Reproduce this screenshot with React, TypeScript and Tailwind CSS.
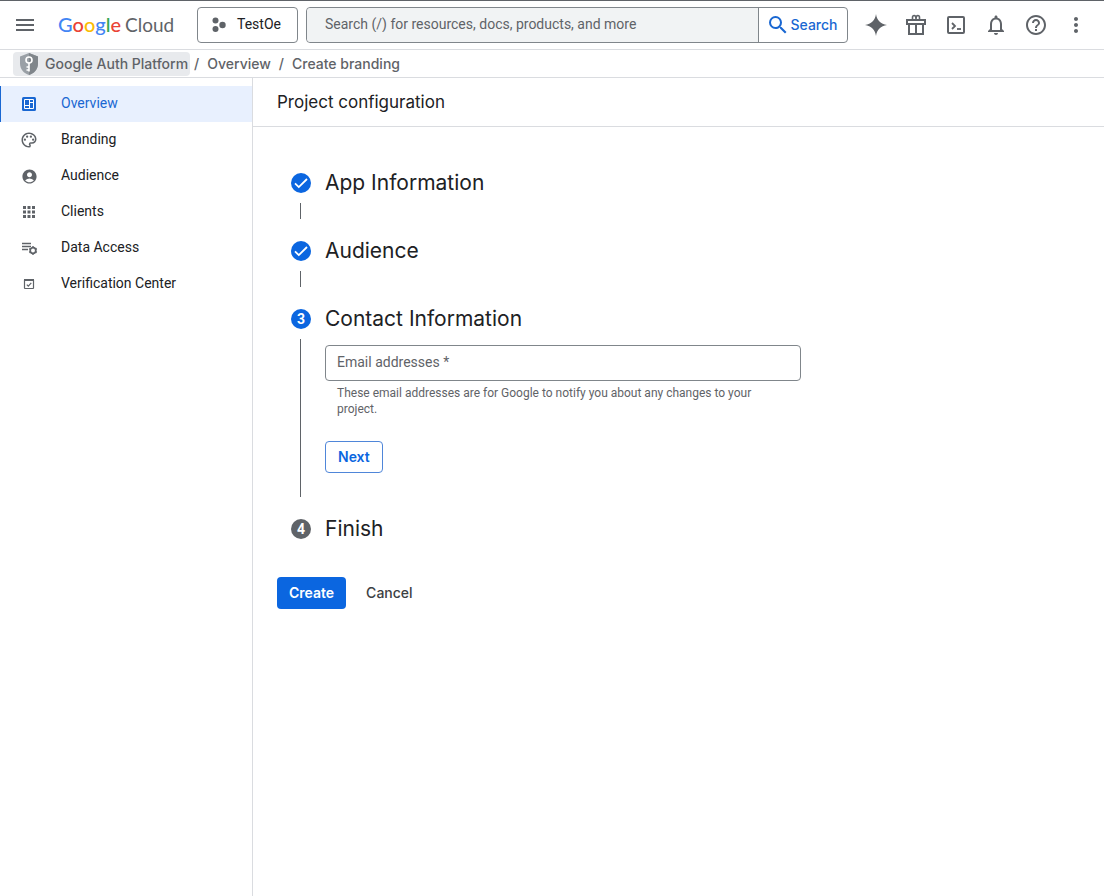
import { useState } from 'react'
import type { ReactNode } from 'react'
import { MdAccountCircle, MdApps, MdHelpOutline, MdMenu, MdMoreVert, MdNotificationsNone, MdOutlinePalette, MdSearch } from 'react-icons/md'

function GiftIcon() {
    return (
        <svg width="24" height="24" viewBox="0 0 24 24" fill="none" stroke="currentColor" strokeWidth="2">
            <path d="M3 7h18v4H3z" />
            <path d="M5 11v10h14V11" />
            <path d="M12 11v10" />
            <path d="M8.500 7V4.500C8.500 3.300 9.200 2.500 10.200 2.500S12 3.300 12 6M15.500 7V4.500C15.500 3.300 14.800 2.500 13.800 2.500S12 3.300 12 6" strokeWidth="1.600" />
        </svg>
    )
}

function ShellIcon() {
    return (
        <svg width="24" height="24" viewBox="0 0 24 24" fill="none" stroke="currentColor" strokeWidth="2">
            <rect x="4" y="4" width="16" height="16" rx="1" />
            <path d="M8 10l3 3-3 3" strokeWidth="1.800" />
            <path d="M13 16h4" strokeWidth="1.800" />
        </svg>
    )
}

function SparkIcon() {
    return (
        <svg width="24" height="24" viewBox="0 0 24 24" fill="currentColor">
            <path d="M12 1c.8 6.200 4.800 10.200 11 11-6.200.8-10.200 4.800-11 11-.8-6.200-4.800-10.200-11-11 6.200-.8 10.200-4.800 11-11z" />
        </svg>
    )
}

function ProjectIcon() {
    return (
        <svg width="16" height="16" viewBox="0 0 16 16" fill="#5f6368">
            <circle cx="4.500" cy="3.500" r="3" />
            <circle cx="4.500" cy="12" r="3" />
            <circle cx="11.500" cy="8" r="3.200" />
        </svg>
    )
}

function ShieldIcon() {
    return (
        <svg width="18" height="22" viewBox="0 0 18 22">
            <path d="M9 0l9 3.500v7C18 16 14.200 20.500 9 22 3.800 20.500 0 16 0 10.500v-7z" fill="#9aa0a6" />
            <path d="M9 0l9 3.500v7C18 16 14.200 20.500 9 22z" fill="#80868b" />
            <circle cx="9" cy="7" r="3" fill="none" stroke="#fff" strokeWidth="1.600" />
            <path d="M9 10V18.500M9 14H6.500M9 17H6.500" stroke="#fff" strokeWidth="1.600" fill="none" />
        </svg>
    )
}

function DashboardIcon() {
    return (
        <svg width="18" height="18" viewBox="0 0 18 18">
            <rect x="2" y="2" width="14" height="14" rx="1.500" fill="currentColor" />
            <path d="M4.500 4.500h9v9h-9zM9.500 4.500v9M4.500 10.500h5M9.500 7.500h4" fill="none" stroke="#fff" />
        </svg>
    )
}

function DataAccessIcon() {
    return (
        <svg width="18" height="18" viewBox="0 0 18 18" fill="none" stroke="currentColor" strokeWidth="1.500">
            <path d="M2 4.500h9M2 7.500h9M2 10.500h6" />
            <circle cx="13" cy="11.500" r="2.800" strokeWidth="1.700" />
            <path d="M13 7.300v1.500M13 14.200v1.500M9.300 9.400l1.300.8M15.400 12.800l1.300.8M9.300 13.600l1.300-.8M15.400 10.200l1.300-.8" strokeWidth="1.800" />
        </svg>
    )
}

function VerificationIcon() {
    return (
        <svg width="18" height="18" viewBox="0 0 18 18" fill="none" stroke="currentColor">
            <rect x="4.500" y="4.500" width="9" height="9" rx=".5" strokeWidth="1.200" />
            <path d="M4 5h10" strokeWidth="2" />
            <path d="M6.800 9.600l1.500 1.500 3-3.200" strokeWidth="1.200" />
        </svg>
    )
}

const navItems = [
    { label: 'Overview', icon: <DashboardIcon /> },
    { label: 'Branding', icon: <MdOutlinePalette size={18} /> },
    { label: 'Audience', icon: <MdAccountCircle size={17} /> },
    { label: 'Clients', icon: <MdApps size={18} /> },
    { label: 'Data Access', icon: <DataAccessIcon /> },
    { label: 'Verification Center', icon: <VerificationIcon /> },
]

const headerActions = [
    { label: 'Gemini', icon: <SparkIcon /> },
    { label: 'Free trial', icon: <GiftIcon /> },
    { label: 'Cloud Shell', icon: <ShellIcon /> },
    { label: 'Notifications', icon: <MdNotificationsNone size={24} /> },
    { label: 'Help', icon: <MdHelpOutline size={24} /> },
    { label: 'More', icon: <MdMoreVert size={24} /> },
]

function Logo() {
    return (
        <a href="#" className="ml-[21px] flex items-baseline gap-1 pb-0.5 font-['Lato',sans-serif] text-xl leading-6 whitespace-nowrap text-[#5f6368]">
            <span className="font-medium">
                <span className="text-[#4285f4]">G</span>
                <span className="text-[#ea4335]">o</span>
                <span className="text-[#fbbc04]">o</span>
                <span className="text-[#4285f4]">g</span>
                <span className="text-[#34a853]">l</span>
                <span className="text-[#ea4335]">e</span>
            </span>
            <span className="text-[19px]">Cloud</span>
        </a>
    )
}

function Header() {
    return (
        <header className="flex h-[50px] items-center border-t border-b border-t-[#5f6368] border-b-[#dadce0] pr-2 pl-[13px] text-[#5f6368]">
            <button aria-label="Main menu"><MdMenu size={24} /></button>
            <Logo />
            <button className="ml-auto flex h-9 w-[101px] shrink-0 items-center gap-2.5 rounded border border-[#80868b] pl-[13px] text-sm text-[#202124]">
                <ProjectIcon />
                <span className="pb-0.5">TestOe</span>
            </button>
            <form className="mx-2 flex h-9 w-[542px] rounded border border-[#80868b]" onSubmit={(e) => e.preventDefault()}>
                <input
                    aria-label="Search"
                    placeholder="Search (/) for resources, docs, products, and more"
                    className="min-w-0 flex-1 rounded-l bg-[#f1f3f4] px-[18px] pb-0.5 text-sm outline-none placeholder:text-[#5f6368]"
                />
                <button className="flex w-[89px] items-center justify-center border-l border-[#80868b] pr-0.5 font-['Inter',sans-serif] text-sm font-medium text-[#1967d2]">
                    <MdSearch size={24} />
                    Search
                </button>
            </form>
            {headerActions.map((action) => (
                <button key={action.label} aria-label={action.label} className="flex h-10 w-10 shrink-0 items-center justify-center">
                    {action.icon}
                </button>
            ))}
        </header>
    )
}

function Breadcrumbs() {
    return (
        <nav aria-label="Breadcrumb" className="flex h-7 items-center border-b border-[#dadce0] pl-[13px] font-['Inter',sans-serif] text-sm font-medium text-[#5f6368]">
            <a href="#" className="flex h-6 items-center gap-[7px] rounded bg-[#e8eaed] pr-0.5 pl-[7px]">
                <ShieldIcon />
                Google Auth Platform
            </a>
            <span className="mr-2 ml-1">/</span>
            <a href="#">Overview</a>
            <span className="mx-2">/</span>
            <a href="#">Create branding</a>
        </nav>
    )
}

function Sidebar() {
    const [active, setActive] = useState('Overview')

    return (
        <nav aria-label="Google Auth Platform" className="w-[253px] shrink-0 border-r border-[#dadce0] pt-2">
            {navItems.map((item) => (
                <a
                    key={item.label}
                    href="#"
                    onClick={() => setActive(item.label)}
                    className={
                        item.label === active
                            ? 'flex h-9 items-center gap-[22px] border-l border-[#1967d2] bg-[#e8f0fe] pl-[18px] text-sm text-[#1967d2]'
                            : 'flex h-9 items-center gap-[22px] border-l border-transparent pl-[18px] text-sm text-[#202124]'
                    }
                >
                    <span className={item.label === active ? 'flex w-5 justify-center' : 'flex w-5 justify-center text-[#5f6368]'}>
                        {item.icon}
                    </span>
                    <span className="pb-0.5">{item.label}</span>
                </a>
            ))}
        </nav>
    )
}

interface StepProps {
    number: number
    title: string
    state: 'done' | 'current' | 'pending'
    last?: boolean
    children?: ReactNode
}

function Step({ number, title, state, last, children }: StepProps) {
    return (
        <li className="pb-3 last:pb-0">
            <div className="flex h-10 items-center gap-[14px]">
                <span className={
                    state === 'pending'
                        ? 'flex h-5 w-5 items-center justify-center rounded-full bg-[#5f6368] text-sm font-bold text-white'
                        : 'flex h-5 w-5 items-center justify-center rounded-full bg-[#0b66e0] text-sm font-bold text-white'
                }>
                    {state === 'done' ? (
                        <svg width="20" height="20" viewBox="0 0 20 20" fill="none" stroke="#fff" strokeWidth="1.800">
                            <path d="M4 10.300l3.800 3.800L16 6" />
                        </svg>
                    ) : number}
                </span>
                <h2 className="font-['Inter',sans-serif] text-[21px] leading-7 text-[#202124]">{title}</h2>
            </div>
            {!last && (
                <div className="ml-[9px] min-h-4 border-l border-[#5f6368] pl-6">{children}</div>
            )}
        </li>
    )
}

export default function App() {
    const [email, setEmail] = useState('')

    return (
        <div className="flex min-h-screen flex-col bg-white font-['Roboto',sans-serif] text-[#202124]">
            <Header />
            <Breadcrumbs />
            <div className="flex flex-1">
                <Sidebar />
                <main className="min-w-0 flex-1">
                    <div className="flex h-[49px] items-center border-b border-[#dadce0] px-6 pt-0.5">
                        <h1 className="font-['Inter',sans-serif] text-[17px]">Project configuration</h1>
                    </div>
                    <form className="px-6 pt-9" onSubmit={(e) => e.preventDefault()}>
                        <ol className="pl-[14px]">
                            <Step number={1} title="App Information" state="done" />
                            <Step number={2} title="Audience" state="done" />
                            <Step number={3} title="Contact Information" state="current">
                                <div className="max-w-[476px] pt-[6px] pb-6">
                                    <div className="relative">
                                        <input
                                            id="email"
                                            value={email}
                                            onChange={(e) => setEmail(e.target.value)}
                                            className="block h-9 w-full rounded border border-[#80868b] px-[11px] text-sm"
                                        />
                                        {!email && (
                                            <label htmlFor="email" className="absolute top-[7px] left-3 text-sm text-[#5f6368]">Email addresses *</label>
                                        )}
                                    </div>
                                    <p className="mt-1 px-3 text-xs text-[#5f6368]">
                                        These email addresses are for Google to notify you about any changes to your project.
                                    </p>
                                    <button className="mt-6 h-8 rounded border border-[#4f86d9] px-3 font-['Inter',sans-serif] text-sm font-semibold text-[#0b66e0]">
                                        Next
                                    </button>
                                </div>
                            </Step>
                            <Step number={4} title="Finish" state="pending" last />
                        </ol>
                        <div className="mt-7 flex gap-2 font-['Inter',sans-serif] text-sm">
                            <button className="h-8 rounded bg-[#0b66e0] px-3 font-semibold text-white">Create</button>
                            <button className="h-8 px-3 font-medium text-[#3c4043]">Cancel</button>
                        </div>
                    </form>
                </main>
            </div>
        </div>
    )
}
